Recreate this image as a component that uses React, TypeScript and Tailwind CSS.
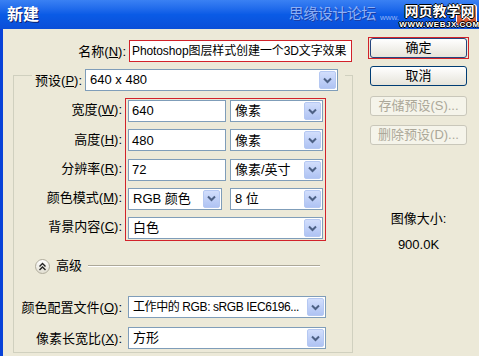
import React from "react";

const font = { fontFamily: '"Liberation Sans", "Noto Sans CJK SC", sans-serif' };

function Arrow() {
    return (
        <span className="flex h-[18px] w-[17px] shrink-0 items-center justify-center rounded-[2px] border border-[#B5C8F2] bg-gradient-to-b from-[#D2DEFC] to-[#AFC3F3]">
            <svg width="9" height="7" viewBox="0 0 9 7">
                <path d="M1 1.5 L4.5 5 L8 1.5" fill="none" stroke="#4D6185" strokeWidth="2" />
            </svg>
        </span>
    );
}

function Select({ value, className, small }: { value: string; className: string; small?: boolean }) {
    return (
        <div className={`flex h-[22px] items-center justify-between border border-[#7F9DB9] bg-white pl-[4px] pr-[1px] text-black ${small ? "text-[12px] tracking-[-0.4px]" : "text-[13px]"} ${className}`}>
            <span className="overflow-hidden whitespace-nowrap">{value}</span>
            <Arrow />
        </div>
    );
}

function Field({ value, className }: { value: string; className: string }) {
    return (
        <div className={`flex h-[22px] items-center border border-[#7F9DB9] bg-white pl-[3px] text-[13px] text-black ${className}`}>
            {value}
        </div>
    );
}

function Label({ text, hot }: { text: string; hot: string }) {
    const [a] = text.split("(");
    return (
        <span className="whitespace-nowrap text-[13px] text-black">
            {a}(<span className="underline">{hot}</span>):
        </span>
    );
}

function XpButton({ text, disabled, className = "" }: { text: string; disabled?: boolean; className?: string }) {
    return (
        <div
            className={`flex h-[20px] w-[97px] items-center justify-center rounded-[3px] border text-[13px] ${
                disabled
                    ? "border-[#C9C7BA] bg-[#F5F4EA] text-[#ACA899]"
                    : "border-[#003C74] bg-gradient-to-b from-white to-[#E6E4DA] text-black"
            } ${className}`}
        >
            {text}
        </div>
    );
}

export default function App() {
    const rows = [
        { label: "宽度(W)", hot: "W" },
        { label: "高度(H)", hot: "H" },
        { label: "分辨率(R)", hot: "R" },
        { label: "颜色模式(M)", hot: "M" },
        { label: "背景内容(C)", hot: "C" },
    ];

    return (
        <div className="flex h-[356px] w-[479px] flex-col overflow-hidden bg-[#ECE9D8]" style={font}>
            {/* Title bar */}
            <div className="flex h-[29px] items-center justify-between bg-gradient-to-b from-[#3A81F3] via-[#0A5BE6] to-[#0A4ED8] pl-[7px]">
                <span className="text-[16px] font-bold text-white [text-shadow:1px_1px_0_#0A1E6E]">新建</span>
                <div className="flex h-full items-center">
                    <span className="text-[15px] tracking-[-0.5px] text-[#8EB0F5] [text-shadow:1px_1px_0_#1B3FA8]">思缘设计论坛</span>
                    <span className="ml-[4px] mt-[6px] text-[8px] text-[#8EB0F5]">www.</span>
                    <div className="relative ml-[1px] flex h-full w-[79px] flex-col items-center">
                        <div className="absolute right-[2px] top-[4px] flex h-[22px] w-[21px] items-center justify-center rounded-[3px] border border-white bg-gradient-to-b from-[#E88A6C] to-[#C9461E]">
                            <svg width="11" height="11" viewBox="0 0 11 11">
                                <path d="M1.5 1.5 L9.5 9.5 M9.5 1.5 L1.5 9.5" stroke="white" strokeWidth="2.2" />
                            </svg>
                        </div>
                        <span className="relative mt-[2px] text-[14px] font-bold leading-[18px] text-white [text-shadow:1px_0_0_#000,-1px_0_0_#000,0_1px_0_#000,0_-1px_0_#000]">网页教学网</span>
                        <span className="relative text-[8px] font-bold leading-[9px] tracking-[0.5px] text-white [text-shadow:1px_0_0_#000,-1px_0_0_#000,0_1px_0_#000,0_-1px_0_#000]">WWW.WEBJX.COM</span>
                    </div>
                </div>
            </div>

            {/* Body */}
            <div className="flex flex-1 border-l-[3px] border-[#0842D8]">
                <div className="flex w-[352px] flex-col">
                    {/* Name */}
                    <div className="mt-[10px] flex items-center">
                        <div className="w-[126px] pr-[3px] text-right">
                            <Label text="名称(N)" hot="N" />
                        </div>
                        <div className="flex h-[22px] w-[223px] items-center overflow-hidden whitespace-nowrap border border-[#D2222A] bg-white pl-[2px] text-[12px] tracking-[-0.1px] text-black">
                            Photoshop图层样式创建一个3D文字效果
                        </div>
                    </div>

                    {/* Fieldset */}
                    <div className="ml-[10px] mt-[12px] flex w-[340px] flex-col border border-[#D0D0BF] pb-[2px]">
                        <div className="-mt-[8px] ml-[18px] flex w-[313px] items-center bg-[#ECE9D8]">
                            <div className="w-[53px] pr-[3px] text-right">
                                <Label text="预设(P)" hot="P" />
                            </div>
                            <Select value="640 x 480" className="w-[253px]" />
                        </div>

                        <div className="mt-[6px] flex">
                            <div className="flex w-[111px] flex-col gap-[7.25px] pt-[1px]">
                                {rows.map((r) => (
                                    <div key={r.label} className="flex h-[22px] items-center justify-end pr-[3px]">
                                        <Label text={r.label} hot={r.hot} />
                                    </div>
                                ))}
                            </div>
                            <div className="flex w-[201px] flex-col gap-[7.25px] border border-[#D2222A] px-[2px] py-[1px]">
                                <div className="flex gap-[4px]">
                                    <Field value="640" className="w-[98px]" />
                                    <Select value="像素" className="w-[93px]" />
                                </div>
                                <div className="flex gap-[4px]">
                                    <Field value="480" className="w-[98px]" />
                                    <Select value="像素" className="w-[93px]" />
                                </div>
                                <div className="flex gap-[4px]">
                                    <Field value="72" className="w-[98px]" />
                                    <Select value="像素/英寸" className="w-[93px]" />
                                </div>
                                <div className="flex gap-[8px]">
                                    <Select value="RGB 颜色" className="w-[94px]" />
                                    <Select value="8 位" className="w-[93px]" />
                                </div>
                                <Select value="白色" className="w-[195px]" />
                            </div>
                        </div>

                        {/* Advanced */}
                        <div className="mt-[15px] flex h-[20px] items-center">
                            <div className="ml-[21px] flex h-[15px] w-[15px] items-center justify-center rounded-full border border-[#B0AC9C] bg-gradient-to-b from-white to-[#E2DFD2]">
                                <svg width="9" height="9" viewBox="0 0 9 9">
                                    <path d="M1.5 4.5 L4.5 1.5 L7.5 4.5 M1.5 8 L4.5 5 L7.5 8" fill="none" stroke="#222" strokeWidth="1.4" />
                                </svg>
                            </div>
                            <span className="ml-[6px] text-[13px] text-black">高级</span>
                            <div className="ml-[6px] flex w-[232px] flex-col">
                                <div className="h-px bg-[#ACA899]" />
                                <div className="h-px bg-white" />
                            </div>
                        </div>

                        <div className="mt-[19px] flex items-center">
                            <div className="w-[111px] pr-[3px] text-right">
                                <Label text="颜色配置文件(O)" hot="O" />
                            </div>
                            <Select value="工作中的 RGB: sRGB IEC6196..." small className="ml-[3px] w-[198px]" />
                        </div>
                        <div className="mt-[7px] flex items-center">
                            <div className="w-[111px] pr-[3px] text-right">
                                <Label text="像素长宽比(X)" hot="X" />
                            </div>
                            <Select value="方形" className="ml-[3px] w-[198px]" />
                        </div>
                    </div>
                </div>

                {/* Right column */}
                <div className="ml-[13px] flex flex-col pt-[8px]">
                    <div className="flex h-[22px] w-[101px] items-center justify-center border border-[#D2222A]">
                        <XpButton text="确定" className="h-[19px] border-[#25457E]" />
                    </div>
                    <XpButton text="取消" className="ml-[2px] mt-[7px]" />
                    <XpButton text="存储预设(S)..." disabled className="ml-[2px] mt-[10px]" />
                    <XpButton text="删除预设(D)..." disabled className="ml-[2px] mt-[9px]" />
                    <div className="ml-[2px] mt-[64px] flex w-[97px] flex-col items-center text-[13px] text-black">
                        <span>图像大小:</span>
                        <span className="mt-[6px]">900.0K</span>
                    </div>
                </div>
            </div>
        </div>
    );
}
